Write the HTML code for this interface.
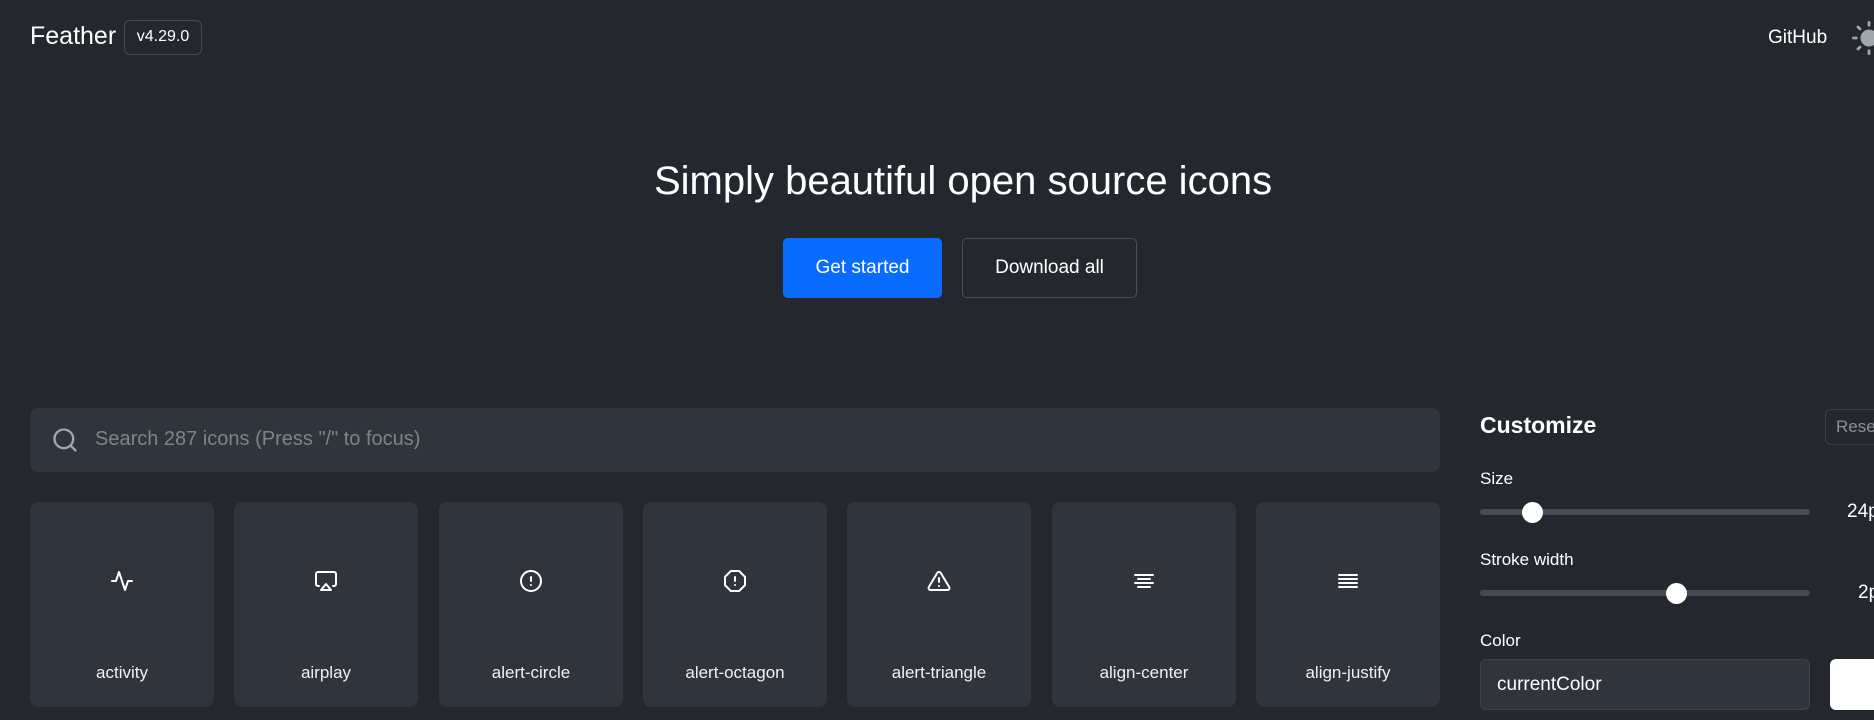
<!DOCTYPE html>
<html><head><meta charset="utf-8"><style>
*{box-sizing:border-box;margin:0;padding:0}
body{width:1874px;height:720px;overflow:hidden;background:#24282e;color:#fff;font-family:"Liberation Sans",sans-serif;position:relative}
.a{position:absolute}
.card{position:absolute;top:502px;width:184px;height:205px;background:#2f343d;border-radius:8px}
.card svg{position:absolute;left:80px;top:67px}
.card span{position:absolute;left:0;right:0;top:161px;text-align:center;font-size:17px;color:#f0f0f0}
.track{position:absolute;left:1480px;width:330px;height:6px;background:#454b55;border-radius:3px}
.thumb{position:absolute;width:21px;height:21px;border-radius:50%;background:#fff}
</style></head><body>
<div class="a" style="left:30px;top:22px;font-size:25px">Feather</div>
<div class="a" style="left:124px;top:20px;width:78px;height:35px;border:1.5px solid #454b55;border-radius:6px;font-size:16px;line-height:32px;text-align:center">v4.29.0</div>
<div class="a" style="left:1768px;top:27px;font-size:19px">GitHub</div>
<svg class="a" style="left:1852px;top:21px" width="34" height="34" viewBox="0 0 24 24" fill="#a0a6ae" stroke="#a0a6ae" stroke-width="2" stroke-linecap="round"><circle cx="12" cy="12" r="5"/><path d="M12 1v2M12 21v2M4.2 4.2l1.4 1.4M18.4 18.4l1.4 1.4M1 12h2M21 12h2M4.2 19.8l1.4-1.4M18.4 5.6l1.4-1.4"/></svg>
<div class="a" style="left:0;width:1926px;top:159px;text-align:center;font-size:40px">Simply beautiful open source icons</div>
<div class="a" style="left:783px;top:238px;width:159px;height:60px;background:#0a6cff;border-radius:5px;font-size:19px;line-height:60px;text-align:center">Get started</div>
<div class="a" style="left:962px;top:238px;width:175px;height:60px;border:1.5px solid #4a5058;border-radius:5px;font-size:19px;line-height:57px;text-align:center">Download all</div>
<div class="a" style="left:30px;top:408px;width:1410px;height:64px;background:#2f343d;border-radius:8px"></div>
<svg class="a" style="left:51px;top:426px" width="28" height="28" viewBox="0 0 24 24" fill="none" stroke="#a0a6ae" stroke-width="2" stroke-linecap="round"><circle cx="11" cy="11" r="8"/><path d="M21 21l-4.35-4.35"/></svg>
<div class="a" style="left:95px;top:428px;font-size:20px;color:#7e838a">Search 287 icons (Press "/" to focus)</div>

<div class="card" style="left:30px"><svg width="24" height="24" viewBox="0 0 24 24" fill="none" stroke="#fff" stroke-width="2" stroke-linecap="round" stroke-linejoin="round"><polyline points="22 12 18 12 15 21 9 3 6 12 2 12"/></svg><span>activity</span></div>
<div class="card" style="left:234px"><svg width="24" height="24" viewBox="0 0 24 24" fill="none" stroke="#fff" stroke-width="2" stroke-linecap="round" stroke-linejoin="round"><path d="M5 17H4a2 2 0 0 1-2-2V5a2 2 0 0 1 2-2h16a2 2 0 0 1 2 2v10a2 2 0 0 1-2 2h-1"/><polygon points="12 15 17 21 7 21 12 15"/></svg><span>airplay</span></div>
<div class="card" style="left:439px"><svg width="24" height="24" viewBox="0 0 24 24" fill="none" stroke="#fff" stroke-width="2" stroke-linecap="round" stroke-linejoin="round"><circle cx="12" cy="12" r="10"/><line x1="12" y1="8" x2="12" y2="12"/><line x1="12" y1="16" x2="12.01" y2="16"/></svg><span>alert-circle</span></div>
<div class="card" style="left:643px"><svg width="24" height="24" viewBox="0 0 24 24" fill="none" stroke="#fff" stroke-width="2" stroke-linecap="round" stroke-linejoin="round"><polygon points="7.86 2 16.14 2 22 7.86 22 16.14 16.14 22 7.86 22 2 16.14 2 7.86 7.86 2"/><line x1="12" y1="8" x2="12" y2="12"/><line x1="12" y1="16" x2="12.01" y2="16"/></svg><span>alert-octagon</span></div>
<div class="card" style="left:847px"><svg width="24" height="24" viewBox="0 0 24 24" fill="none" stroke="#fff" stroke-width="2" stroke-linecap="round" stroke-linejoin="round"><path d="M10.29 3.86L1.82 18a2 2 0 0 0 1.71 3h16.94a2 2 0 0 0 1.71-3L13.71 3.86a2 2 0 0 0-3.42 0z"/><line x1="12" y1="9" x2="12" y2="13"/><line x1="12" y1="17" x2="12.01" y2="17"/></svg><span>alert-triangle</span></div>
<div class="card" style="left:1052px"><svg width="24" height="24" viewBox="0 0 24 24" fill="none" stroke="#fff" stroke-width="2" stroke-linecap="round" stroke-linejoin="round"><line x1="18" y1="10" x2="6" y2="10"/><line x1="21" y1="6" x2="3" y2="6"/><line x1="21" y1="14" x2="3" y2="14"/><line x1="18" y1="18" x2="6" y2="18"/></svg><span>align-center</span></div>
<div class="card" style="left:1256px"><svg width="24" height="24" viewBox="0 0 24 24" fill="none" stroke="#fff" stroke-width="2" stroke-linecap="round" stroke-linejoin="round"><line x1="21" y1="10" x2="3" y2="10"/><line x1="21" y1="6" x2="3" y2="6"/><line x1="21" y1="14" x2="3" y2="14"/><line x1="21" y1="18" x2="3" y2="18"/></svg><span>align-justify</span></div>

<div class="a" style="left:1480px;top:412px;font-size:23px;font-weight:bold">Customize</div>
<div class="a" style="left:1825px;top:409px;width:70px;height:36px;border:1.5px solid #3a4048;border-radius:6px;font-size:17px;color:#8a9098;line-height:33px;padding-left:10px">Reset</div>
<div class="a" style="left:1480px;top:469px;font-size:17px">Size</div>
<div class="track" style="top:509px"></div><div class="thumb" style="left:1522px;top:502px"></div>
<div class="a" style="left:1847px;top:501px;font-size:19px">24px</div>
<div class="a" style="left:1480px;top:550px;font-size:17px">Stroke width</div>
<div class="track" style="top:590px"></div><div class="thumb" style="left:1666px;top:583px"></div>
<div class="a" style="left:1858px;top:582px;font-size:19px">2px</div>
<div class="a" style="left:1480px;top:631px;font-size:17px">Color</div>
<div class="a" style="left:1480px;top:659px;width:330px;height:51px;background:#2f343d;border:1px solid #3d434c;border-radius:6px;font-size:19px;line-height:49px;padding-left:16px">currentColor</div>
<div class="a" style="left:1830px;top:659px;width:80px;height:51px;background:#fff;border-radius:6px"></div>
</body></html>
